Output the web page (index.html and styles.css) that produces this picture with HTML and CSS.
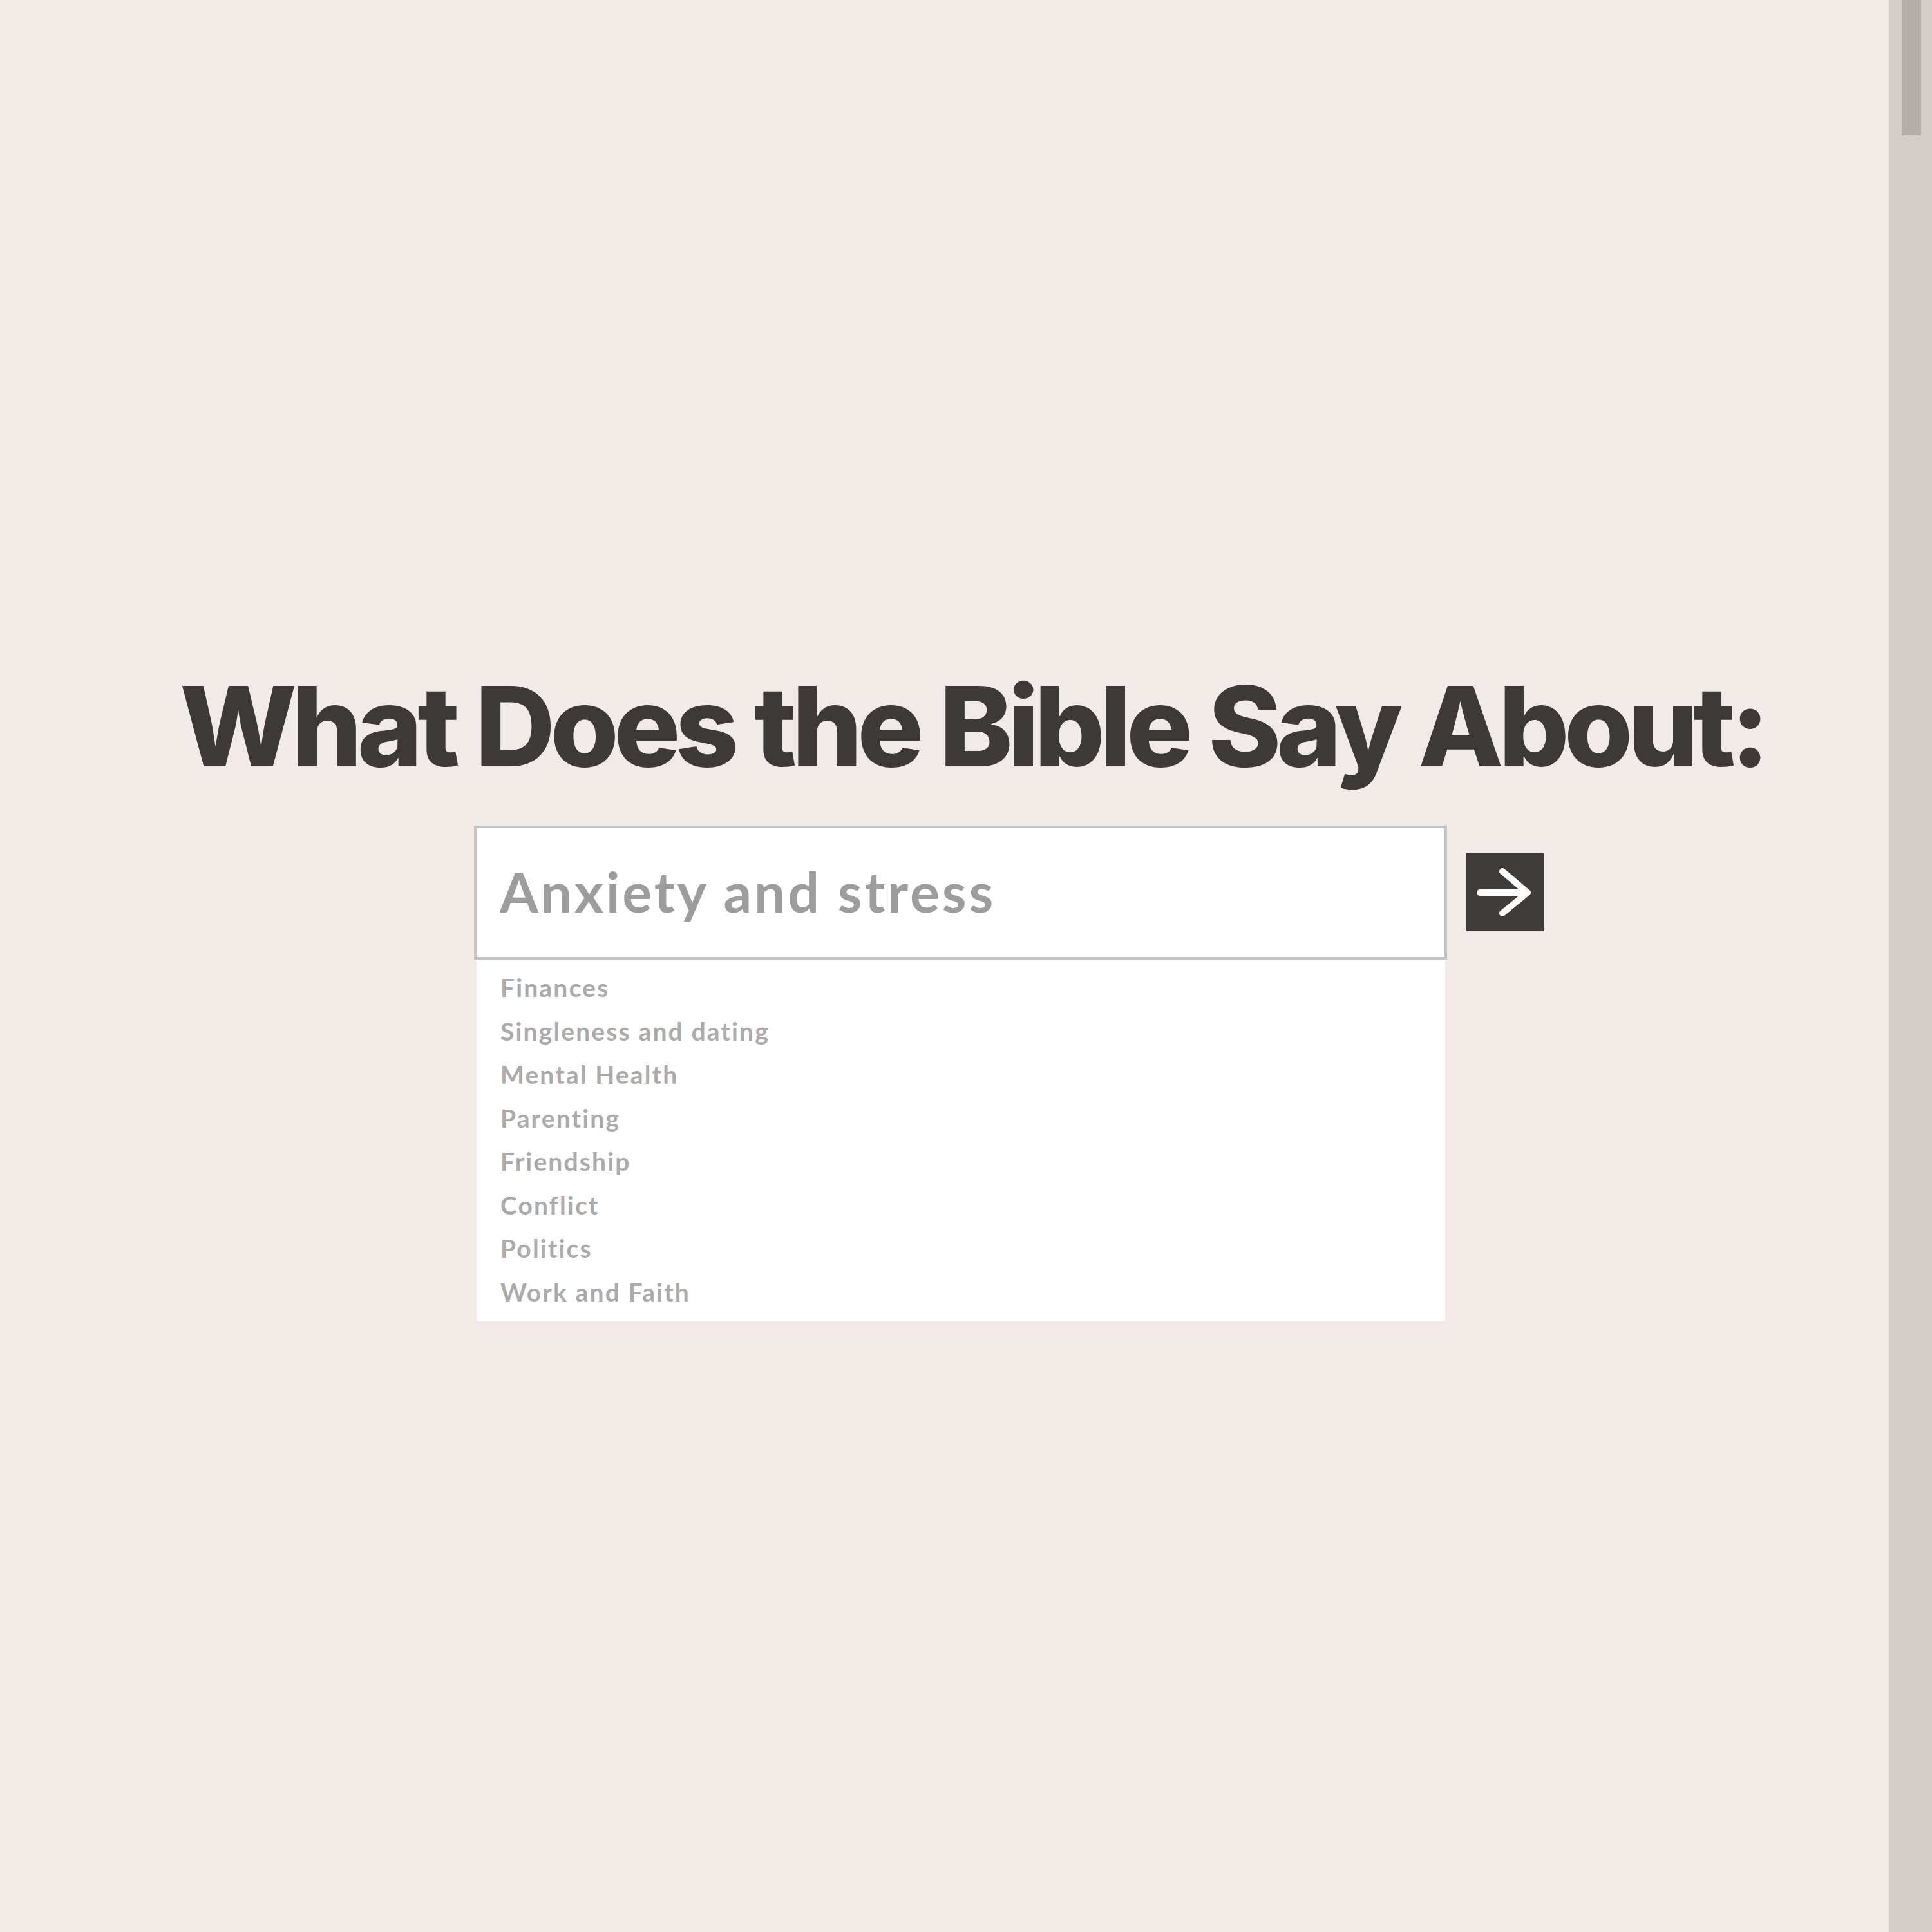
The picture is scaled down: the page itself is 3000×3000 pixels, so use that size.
FILE: index.html
```html
<!DOCTYPE html>
<html lang="en">
<head>
<meta charset="utf-8">
<title>What Does the Bible Say About</title>
<link rel="stylesheet" href="styles.css">
</head>
<body>
<div class="page">
  <main class="hero">
    <h1 class="title">What Does the Bible Say About:</h1>
    <div class="search-row">
      <div class="search-col">
        <input class="search-input" type="text" placeholder="Anxiety and stress">
        <ul class="suggestions">
          <li>Finances</li>
          <li>Singleness and dating</li>
          <li>Mental Health</li>
          <li>Parenting</li>
          <li>Friendship</li>
          <li>Conflict</li>
          <li>Politics</li>
          <li>Work and Faith</li>
        </ul>
      </div>
      <button class="go" type="button" aria-label="Search">
        <svg viewBox="0 0 121 121" width="121" height="121">
          <path d="M22 61 H96 M57 28 L96 61 L57 93" fill="none" stroke="#ffffff" stroke-width="10" stroke-linecap="round" stroke-linejoin="round"/>
        </svg>
      </button>
    </div>
  </main>
  <div class="scrollbar"><div class="thumb"></div></div>
</div>
</body>
</html>
```
FILE: styles.css
```css
html, body {
  margin: 0;
  padding: 0;
  background: #f2eae7;
}

.page {
  display: flex;
  height: 3000px;
  overflow: hidden;
}

.hero {
  flex: 1;
  padding: 1041px 0 0 279px;
  background: #f2eae7;
}

.title {
  margin: 0;
  font-family: "Inter", "Liberation Sans", sans-serif;
  font-weight: 800;
  font-size: 172px;
  line-height: 172px;
  letter-spacing: -0.045em;
  word-spacing: 0.01em;
  color: #3d3937;
  white-space: nowrap;
}

.search-row {
  display: flex;
  align-items: flex-start;
  margin: 69px 0 0 457px;
}

.search-col {
  display: flex;
  flex-direction: column;
  width: 1511px;
}

.search-input {
  box-sizing: border-box;
  width: 1511px;
  height: 208px;
  margin: 0;
  padding: 0 0 6px 36px;
  border: 4px solid #c3c3c3;
  border-radius: 0;
  background: #ffffff;
  outline: none;
  font-family: "Lato", "Liberation Sans", sans-serif;
  font-weight: 700;
  font-size: 86px;
  letter-spacing: 0.045em;
  font-variant-ligatures: none;
  color: #9d9d9d;
}

.search-input::placeholder {
  color: #9d9d9d;
  opacity: 1;
}

.suggestions {
  list-style: none;
  margin: 0 3px 0 4px;
  padding: 10px 0 12px 37px;
  background: #ffffff;
  font-family: "Lato", "Liberation Sans", sans-serif;
  font-weight: 700;
  font-size: 39px;
  line-height: 67.5px;
  letter-spacing: 0.055em;
  font-variant-ligatures: none;
  color: #ababab;
}

.go {
  display: flex;
  align-items: center;
  justify-content: center;
  width: 121px;
  height: 121px;
  margin: 43px 0 0 29px;
  padding: 0;
  border: none;
  background: #3f3b39;
}

.go svg {
  display: block;
}

.scrollbar {
  width: 67px;
  height: 3000px;
  background: #d4ccc8;
  padding-left: 20px;
  box-sizing: border-box;
}

.thumb {
  width: 30px;
  height: 210px;
  background: #b4ada9;
}
```
